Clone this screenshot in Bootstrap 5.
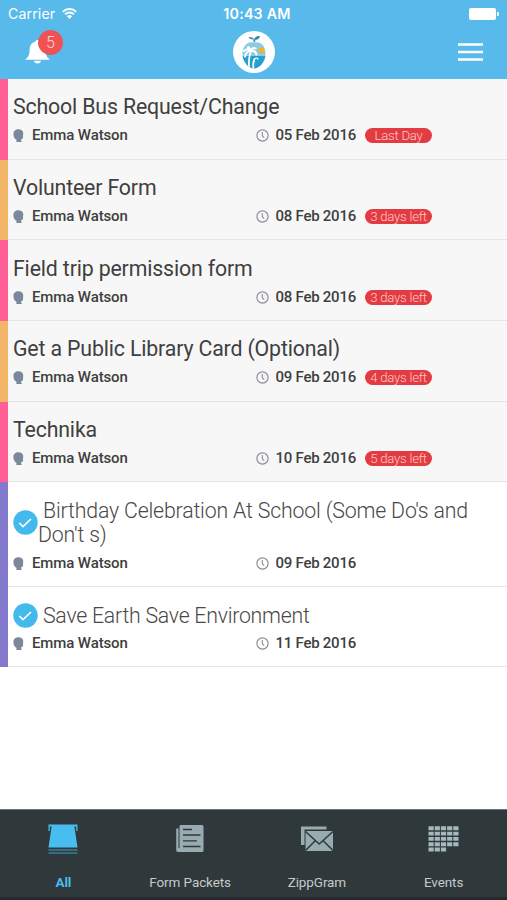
<!DOCTYPE html>
<html lang="en">
<head>
<meta charset="utf-8">
<meta name="viewport" content="width=device-width, initial-scale=1">
<title>School forms</title>
<link href="https://cdn.jsdelivr.net/npm/bootstrap@5.3.0/dist/css/bootstrap.min.css" rel="stylesheet">
<style>
  body { font-family: Roboto, "Open Sans", sans-serif; color: #404040; background: #fff; }
  svg { display: block; flex: none; }
  .app-screen { height: 900px; width: 507px; overflow: hidden; }
  .app-header { background: #58b9eb; height: 79px; flex: none; }
  .status-bar { height: 27px; font: 15px/27px Inter, "Liberation Sans", sans-serif; }
  .status-bar > div { flex: 1 1 0; }
  .status-time { font-weight: 600; font-size: 14.3px; letter-spacing: .2px; padding-left: 7px; }
  .status-carrier { font-size: 14.2px; letter-spacing: .1px; }
  .title-bar { height: 50px; }
  .title-bar > div { flex: 1 1 0; }
  .bell-count { left: 14px; top: -10px; width: 25px; height: 25px; border-radius: 50%; background: #ee5253; color: #ffd9d6; font-size: 16px; line-height: 25px; font-weight: 300; text-align: center; }
  .form-row { --edge: #ff5f95; height: 80.65px; background: #f7f7f7; border-left: 8px solid var(--edge); padding: 16.4px 8px 0 5px; box-shadow: inset 0 -1px #e4e4e4; }
  .form-row.tone-orange { --edge: #f3b568; }
  .form-row.tone-done { --edge: #8278cc; background: #fff; }
  .form-row.two-line { height: 104.6px; }
  .form-title { font-size: 21.3px; line-height: 24px; letter-spacing: -.15px; margin: 0; font-weight: 400; }
  .tone-done .form-title { font-weight: 300; color: #484848; letter-spacing: -.17px; }
  .tone-done:last-child .form-title { letter-spacing: -.25px; }
  .title-lead { padding-left: 5px; }
  .form-meta { margin-top: 6px; height: 21px; font-size: 15px; font-weight: 500; line-height: 21px; letter-spacing: -.12px; }
  .tone-done:last-child .form-meta { margin-top: 5px; }
  .meta-person { width: 243px; gap: 8px; }
  .meta-date { width: 109px; gap: 6.500px; white-space: nowrap; letter-spacing: -.25px; }
  .due-pill { width: 67px; height: 15px; border-radius: 8px; background: #e23c42; color: #ffc9c6; font-size: 13.2px; line-height: 15px; font-weight: 300; white-space: nowrap; letter-spacing: -.25px; }
  .tab-strip { height: 91px; background: linear-gradient(#2f383b 96%, #29282d 97%); flex: none; color: #c3cacc; border-top: 1px solid #6b7678; }
  .tab-item { flex: 1 1 0; padding-top: 14px; font-size: 13.5px; letter-spacing: -.1px; line-height: 18px; color: inherit; text-decoration: none; }
  .tab-item svg { margin-bottom: 19px; }
  .tab-item.current { color: #48bdec; font-weight: 700; }
</style>
</head>
<body>
<svg width="0" height="0" class="position-absolute" aria-hidden="true">
  <symbol id="head" viewBox="1.500 0 11 13"><path fill="#7b879a" d="M6.800.3C9.500.3 11.700 1.500 11.800 4.300c0 1-.3 1.700-.3 2.700l.1 1.300c-.3 1.500-.9 2-2 2l-.2.8 1 1.800H4.800l.2-2.200C3.200 9.800 1.900 7.800 1.900 5.200 1.900 2.200 4 .3 6.800.3z"/></symbol>
  <symbol id="clock" viewBox="0 0 13 13"><circle cx="6.500" cy="6.500" r="5.600" fill="none" stroke="#8b9098" stroke-width="1.200"/><path d="M6.300 3v3.700l1.900 1.900" fill="none" stroke="#8b9098" stroke-width="1.100"/></symbol>
  <symbol id="tick" viewBox="0 0 25 25"><circle cx="12.500" cy="12.500" r="12.200" fill="#43b9ec"/><path d="M6.300 13l3.700 3.500 8-7.500" fill="none" stroke="#fff" stroke-width="1.700"/></symbol>
</svg>
<div class="app-screen d-flex flex-column">
  <header class="app-header text-white">
    <div class="status-bar d-flex align-items-center px-2">
      <div class="d-flex align-items-center status-carrier"><span>Carrier</span>
        <svg width="15" height="11" viewBox="0 0 15 11" style="margin-left:7px"><g fill="none" stroke="#fff" stroke-width="1.900"><path d="M.8 3.800a9.500 9.500 0 0 1 13.400 0"/><path d="M3.100 6.300a6.200 6.200 0 0 1 8.800 0"/></g><path fill="#fff" d="M7.500 11L4.900 8.300a3.700 3.700 0 0 1 5.200 0z"/></svg>
      </div>
      <div class="status-time text-center text-nowrap">10:43 AM</div>
      <div class="d-flex justify-content-end"><svg width="30" height="12" viewBox="0 0 30 12"><rect width="27" height="12" rx="2" fill="#fff"/><path d="M28 4h1q1 0 1 2t-1 2h-1z" fill="#fff"/></svg></div>
    </div>
    <div class="title-bar d-flex align-items-center">
      <div class="ps-4"><div class="position-relative">
        <svg width="27" height="24" viewBox="0 0 27 26" preserveAspectRatio="none"><path fill="#fff" d="M13.500 0c1.200 0 1.800.7 1.800 1.700 4.500 1 6 4.700 6.200 9.300.2 5 1 7.300 3.900 9.600v.9H1.700v-.9c2.900-2.300 3.700-4.600 3.900-9.600.2-4.600 1.700-8.300 6.100-9.300 0-1 .6-1.700 1.800-1.700zM10 22.500h7c-.3 1.800-1.500 3-3.500 3s-3.200-1.200-3.500-3z"/></svg>
        <span class="bell-count position-absolute">5</span>
      </div></div>
      <div class="d-flex justify-content-center">
        <svg width="42" height="42" viewBox="0 0 42 42"><circle cx="21" cy="21" r="21" fill="#fff"/>
          <clipPath id="fruit"><path d="M21 11.500c-8-1.500-11.500 5-11.500 11.500 0 8 6 14.500 11.500 14.500S32.500 31 32.500 23c0-7-3.500-13-11.500-11.500z"/></clipPath>
          <g clip-path="url(#fruit)"><path fill="#8ccbe2" d="M9 9h26v17H9z"/><path fill="#239fd0" d="M9 25h26v13H9z"/><circle cx="28.500" cy="19.500" r="3" fill="#e8b52d"/>
          <g fill="none" stroke="#fff" stroke-linecap="round"><path stroke-width="1.800" d="M18 20c-2 5-2.500 9-2 18M21.500 28c-1.500 3-1.500 6-1 10"/><path stroke-width="2" d="M18 20c-3-3-5-2-7 0M18 20c-3-.5-5 1.500-6 5.500M18 20c-1-2-1-3-3-4M18 20c1-3 3-3.500 4.500-2.500M18 20c3-.5 5 1 5.500 3.500"/><path stroke-width="1.200" d="M21.500 28c1.200-1.500 2.500-1.200 3.500 0"/></g></g>
          <path fill="#338eb5" d="M20.500 11c-.3-2 .3-3 1.300-4 1.300-1.700 3-2 5.200-2-.5 2.700-2 4-4.500 3.800L22 11zM15.500 6c2.500-.3 4.700.5 5.500 2.300-2 .5-4.500-.2-5.500-2.300z"/></svg>
      </div>
      <div class="d-flex justify-content-end pe-4"><svg width="25" height="18" viewBox="0 0 25 18"><path stroke="#fff" stroke-width="2.600" d="M0 1.500h25M0 9h25M0 16.500h25"/></svg></div>
    </div>
  </header>

  <main class="flex-grow-1">
    <section class="form-row">
      <h2 class="form-title">School Bus Request/Change</h2>
      <div class="form-meta d-flex align-items-center"><div class="meta-person d-flex align-items-center"><svg width="11" height="13"><use href="#head"/></svg>Emma Watson</div><div class="meta-date d-flex align-items-center"><svg width="13" height="13"><use href="#clock"/></svg>05 Feb 2016</div><span class="due-pill text-center">Last Day</span></div>
    </section>
    <section class="form-row tone-orange">
      <h2 class="form-title">Volunteer Form</h2>
      <div class="form-meta d-flex align-items-center"><div class="meta-person d-flex align-items-center"><svg width="11" height="13"><use href="#head"/></svg>Emma Watson</div><div class="meta-date d-flex align-items-center"><svg width="13" height="13"><use href="#clock"/></svg>08 Feb 2016</div><span class="due-pill text-center">3 days left</span></div>
    </section>
    <section class="form-row">
      <h2 class="form-title">Field trip permission form</h2>
      <div class="form-meta d-flex align-items-center"><div class="meta-person d-flex align-items-center"><svg width="11" height="13"><use href="#head"/></svg>Emma Watson</div><div class="meta-date d-flex align-items-center"><svg width="13" height="13"><use href="#clock"/></svg>08 Feb 2016</div><span class="due-pill text-center">3 days left</span></div>
    </section>
    <section class="form-row tone-orange">
      <h2 class="form-title">Get a Public Library Card (Optional)</h2>
      <div class="form-meta d-flex align-items-center"><div class="meta-person d-flex align-items-center"><svg width="11" height="13"><use href="#head"/></svg>Emma Watson</div><div class="meta-date d-flex align-items-center"><svg width="13" height="13"><use href="#clock"/></svg>09 Feb 2016</div><span class="due-pill text-center">4 days left</span></div>
    </section>
    <section class="form-row">
      <h2 class="form-title">Technika</h2>
      <div class="form-meta d-flex align-items-center"><div class="meta-person d-flex align-items-center"><svg width="11" height="13"><use href="#head"/></svg>Emma Watson</div><div class="meta-date d-flex align-items-center"><svg width="13" height="13"><use href="#clock"/></svg>10 Feb 2016</div><span class="due-pill text-center">5 days left</span></div>
    </section>
    <section class="form-row tone-done two-line">
      <div class="d-flex align-items-center"><svg width="25" height="25"><use href="#tick"/></svg><h2 class="form-title"><span class="title-lead">Birthday Celebration At School (Some Do's and</span><br>Don't s)</h2></div>
      <div class="form-meta d-flex align-items-center"><div class="meta-person d-flex align-items-center"><svg width="11" height="13"><use href="#head"/></svg>Emma Watson</div><div class="meta-date d-flex align-items-center"><svg width="13" height="13"><use href="#clock"/></svg>09 Feb 2016</div></div>
    </section>
    <section class="form-row tone-done">
      <div class="d-flex align-items-center"><svg width="25" height="25"><use href="#tick"/></svg><h2 class="form-title"><span class="title-lead">Save Earth Save Environment</span></h2></div>
      <div class="form-meta d-flex align-items-center"><div class="meta-person d-flex align-items-center"><svg width="11" height="13"><use href="#head"/></svg>Emma Watson</div><div class="meta-date d-flex align-items-center"><svg width="13" height="13"><use href="#clock"/></svg>11 Feb 2016</div></div>
    </section>
  </main>

  <nav class="tab-strip d-flex">
    <a class="tab-item current d-flex flex-column align-items-center" href="#">
      <svg width="30" height="30" viewBox="0 0 30 30"><path fill="#48bdf0" d="M.5.500h29V7h-1.300V2.500h-1.800L29.500 23.500H.5L3.600 2.500H1.800V7H.5z"/><path stroke="#3f9fc6" stroke-width="1.200" d="M.5 26h29M.5 29h29"/></svg>All</a>
    <a class="tab-item d-flex flex-column align-items-center" href="#">
      <svg width="30" height="30" viewBox="0 0 30 30"><path fill="#98abb0" d="M5.500 1H27q1.500 0 1.500 1.500v24q0 1.500-1.500 1.500H3q-1.800 0-1.800-1.800V4.500H3.500V24h1V2.500Q4.500 1 5.500 1z"/><path stroke="#2f383b" stroke-width="1.300" d="M8 5.500h9M8 11h17.500M8 16.800h14M8 22.500h17.500"/></svg>Form Packets</a>
    <a class="tab-item d-flex flex-column align-items-center" href="#">
      <svg width="34" height="30" viewBox="0 0 34 30"><path fill="#98abb0" d="M1 2.500h25.500v3H4.500V21H1z"/><path fill="#98abb0" d="M5.500 7H33v20H5.500z"/><path fill="none" stroke="#2f383b" stroke-width="1.500" d="M5.500 7.500L19.200 20 33 7.500M5.500 26.500l9.500-9.500M33 26.500L23.500 17"/></svg>ZippGram</a>
    <a class="tab-item d-flex flex-column align-items-center" href="#">
      <svg width="32" height="30" viewBox="0 0 32 30"><g stroke="#a5b8bd" stroke-width="3.900"><path stroke-dasharray="5.200 1" d="M.5 4.300h30.200M.5 9.600h30.200M.5 14.900h30.200M.5 20.200h30.200M.5 25.500h17.600"/></g></svg>Events</a>
  </nav>
</div>
<script src="https://cdn.jsdelivr.net/npm/bootstrap@5.3.0/dist/js/bootstrap.bundle.min.js"></script>
</body>
</html>
